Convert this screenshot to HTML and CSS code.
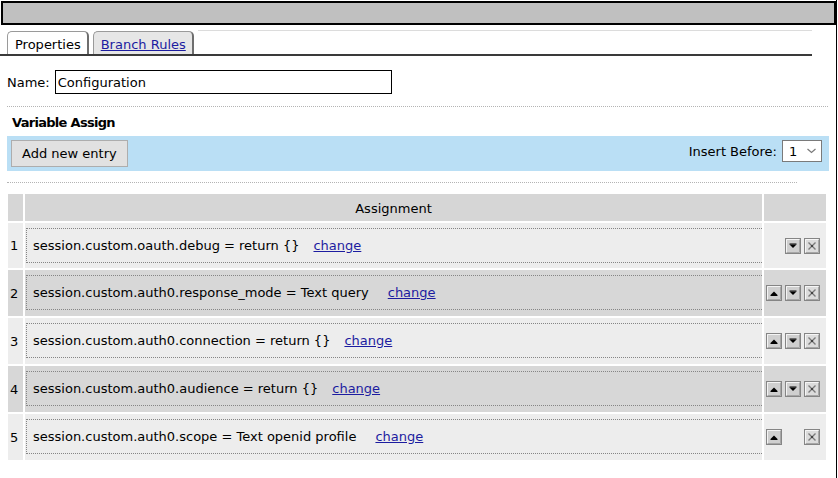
FILE: index.html
```html
<!DOCTYPE html>
<html>
<head>
<meta charset="utf-8">
<title>Variable Assign</title>
<link rel="stylesheet" href="styles.css">
</head>
<body>
<div class="page">
  <div class="titlebar"></div>

  <div class="tabs">
    <div class="tab active">Properties</div>
    <div class="tab"><a href="#">Branch Rules</a></div>
    <div class="tab-fill"></div>
  </div>

  <div class="name-row">
    <label class="name-label">Name:</label>
    <input class="name-input" type="text" value="Configuration">
  </div>

  <hr class="dots">

  <h2 class="section-title">Variable Assign</h2>

  <div class="toolbar">
    <button class="btn">Add new entry</button>
    <div class="insert">
      <span>Insert Before:</span>
      <div class="select">
        <span>1</span>
        <svg class="chev" width="9" height="6" viewBox="0 0 9 6"><path d="M0.5 1l4 3.5 4-3.5" fill="none" stroke="#7a7a7a" stroke-width="1.2"/></svg>
      </div>
    </div>
  </div>

  <hr class="dots short">

  <table class="grid">
    <thead>
      <tr class="head">
        <th class="c-num"></th>
        <th class="c-assign">Assignment</th>
        <th class="c-act"></th>
      </tr>
    </thead>
    <tbody>
      <tr class="odd first">
        <td class="c-num">1</td>
        <td class="c-assign"><div class="entry"><span>session.custom.oauth.debug = return {}</span><a href="#">change</a></div></td>
        <td class="c-act"><div class="acts">
          <span class="slot"></span>
          <svg class="ib" width="16" height="16" viewBox="0 0 16 16"><rect x="0.5" y="0.5" width="15" height="15" fill="#cfcfcf" stroke="#858585"/><path d="M1.5 14V1.5H14" stroke="#f4f4f4" fill="none"/><path d="M2 14.5H14.5V2" stroke="#a6a6a6" fill="none"/><path d="M4.5 6.5h7L8 10z" fill="#000"/><path d="M4.5 6h7" stroke="#000"/></svg>
          <svg class="ib" width="16" height="16" viewBox="0 0 16 16"><rect x="0.5" y="0.5" width="15" height="15" fill="#dcdcdc" stroke="#858585"/><path d="M1.5 14V1.5H14" stroke="#f6f6f6" fill="none"/><path d="M2 14.5H14.5V2" stroke="#a6a6a6" fill="none"/><path d="M4.5 4.5l7 7M11.5 4.5l-7 7" stroke="#7a7a7a" stroke-width="1.4"/><rect x="7" y="7" width="2" height="2" fill="#444"/></svg>
        </div></td>
      </tr>
      <tr class="even">
        <td class="c-num">2</td>
        <td class="c-assign"><div class="entry"><span>session.custom.auth0.response_mode = Text query</span><a class="wide" href="#">change</a></div></td>
        <td class="c-act"><div class="acts">
          <svg class="ib" width="16" height="16" viewBox="0 0 16 16"><rect x="0.5" y="0.5" width="15" height="15" fill="#cfcfcf" stroke="#858585"/><path d="M1.5 14V1.5H14" stroke="#f4f4f4" fill="none"/><path d="M2 14.5H14.5V2" stroke="#a6a6a6" fill="none"/><path d="M4.5 10h7L8 6.5z" fill="#000"/><path d="M4.5 10.5h7" stroke="#000"/></svg>
          <svg class="ib" width="16" height="16" viewBox="0 0 16 16"><rect x="0.5" y="0.5" width="15" height="15" fill="#cfcfcf" stroke="#858585"/><path d="M1.5 14V1.5H14" stroke="#f4f4f4" fill="none"/><path d="M2 14.5H14.5V2" stroke="#a6a6a6" fill="none"/><path d="M4.5 6.5h7L8 10z" fill="#000"/><path d="M4.5 6h7" stroke="#000"/></svg>
          <svg class="ib" width="16" height="16" viewBox="0 0 16 16"><rect x="0.5" y="0.5" width="15" height="15" fill="#dcdcdc" stroke="#858585"/><path d="M1.5 14V1.5H14" stroke="#f6f6f6" fill="none"/><path d="M2 14.5H14.5V2" stroke="#a6a6a6" fill="none"/><path d="M4.5 4.5l7 7M11.5 4.5l-7 7" stroke="#7a7a7a" stroke-width="1.4"/><rect x="7" y="7" width="2" height="2" fill="#444"/></svg>
        </div></td>
      </tr>
      <tr class="odd">
        <td class="c-num">3</td>
        <td class="c-assign"><div class="entry"><span>session.custom.auth0.connection = return {}</span><a href="#">change</a></div></td>
        <td class="c-act"><div class="acts">
          <svg class="ib" width="16" height="16" viewBox="0 0 16 16"><rect x="0.5" y="0.5" width="15" height="15" fill="#cfcfcf" stroke="#858585"/><path d="M1.5 14V1.5H14" stroke="#f4f4f4" fill="none"/><path d="M2 14.5H14.5V2" stroke="#a6a6a6" fill="none"/><path d="M4.5 10h7L8 6.5z" fill="#000"/><path d="M4.5 10.5h7" stroke="#000"/></svg>
          <svg class="ib" width="16" height="16" viewBox="0 0 16 16"><rect x="0.5" y="0.5" width="15" height="15" fill="#cfcfcf" stroke="#858585"/><path d="M1.5 14V1.5H14" stroke="#f4f4f4" fill="none"/><path d="M2 14.5H14.5V2" stroke="#a6a6a6" fill="none"/><path d="M4.5 6.5h7L8 10z" fill="#000"/><path d="M4.5 6h7" stroke="#000"/></svg>
          <svg class="ib" width="16" height="16" viewBox="0 0 16 16"><rect x="0.5" y="0.5" width="15" height="15" fill="#dcdcdc" stroke="#858585"/><path d="M1.5 14V1.5H14" stroke="#f6f6f6" fill="none"/><path d="M2 14.5H14.5V2" stroke="#a6a6a6" fill="none"/><path d="M4.5 4.5l7 7M11.5 4.5l-7 7" stroke="#7a7a7a" stroke-width="1.4"/><rect x="7" y="7" width="2" height="2" fill="#444"/></svg>
        </div></td>
      </tr>
      <tr class="even">
        <td class="c-num">4</td>
        <td class="c-assign"><div class="entry"><span>session.custom.auth0.audience = return {}</span><a href="#">change</a></div></td>
        <td class="c-act"><div class="acts">
          <svg class="ib" width="16" height="16" viewBox="0 0 16 16"><rect x="0.5" y="0.5" width="15" height="15" fill="#cfcfcf" stroke="#858585"/><path d="M1.5 14V1.5H14" stroke="#f4f4f4" fill="none"/><path d="M2 14.5H14.5V2" stroke="#a6a6a6" fill="none"/><path d="M4.5 10h7L8 6.5z" fill="#000"/><path d="M4.5 10.5h7" stroke="#000"/></svg>
          <svg class="ib" width="16" height="16" viewBox="0 0 16 16"><rect x="0.5" y="0.5" width="15" height="15" fill="#cfcfcf" stroke="#858585"/><path d="M1.5 14V1.5H14" stroke="#f4f4f4" fill="none"/><path d="M2 14.5H14.5V2" stroke="#a6a6a6" fill="none"/><path d="M4.5 6.5h7L8 10z" fill="#000"/><path d="M4.5 6h7" stroke="#000"/></svg>
          <svg class="ib" width="16" height="16" viewBox="0 0 16 16"><rect x="0.5" y="0.5" width="15" height="15" fill="#dcdcdc" stroke="#858585"/><path d="M1.5 14V1.5H14" stroke="#f6f6f6" fill="none"/><path d="M2 14.5H14.5V2" stroke="#a6a6a6" fill="none"/><path d="M4.5 4.5l7 7M11.5 4.5l-7 7" stroke="#7a7a7a" stroke-width="1.4"/><rect x="7" y="7" width="2" height="2" fill="#444"/></svg>
        </div></td>
      </tr>
      <tr class="odd">
        <td class="c-num">5</td>
        <td class="c-assign"><div class="entry"><span>session.custom.auth0.scope = Text openid profile</span><a class="wide" href="#">change</a></div></td>
        <td class="c-act"><div class="acts">
          <svg class="ib" width="16" height="16" viewBox="0 0 16 16"><rect x="0.5" y="0.5" width="15" height="15" fill="#cfcfcf" stroke="#858585"/><path d="M1.5 14V1.5H14" stroke="#f4f4f4" fill="none"/><path d="M2 14.5H14.5V2" stroke="#a6a6a6" fill="none"/><path d="M4.5 10h7L8 6.5z" fill="#000"/><path d="M4.5 10.5h7" stroke="#000"/></svg>
          <span class="slot"></span>
          <svg class="ib" width="16" height="16" viewBox="0 0 16 16"><rect x="0.5" y="0.5" width="15" height="15" fill="#dcdcdc" stroke="#858585"/><path d="M1.5 14V1.5H14" stroke="#f6f6f6" fill="none"/><path d="M2 14.5H14.5V2" stroke="#a6a6a6" fill="none"/><path d="M4.5 4.5l7 7M11.5 4.5l-7 7" stroke="#7a7a7a" stroke-width="1.4"/><rect x="7" y="7" width="2" height="2" fill="#444"/></svg>
        </div></td>
      </tr>
    </tbody>
  </table>
</div>
</body>
</html>
```

FILE: styles.css
```css
* { box-sizing: border-box; }

body {
  margin: 0;
  background: #fff;
  color: #000;
  font-family: "DejaVu Sans", Verdana, sans-serif;
  font-size: 13px;
}

a { color: #1c1ca0; text-decoration: underline; }

.page {
  width: 837px;
  height: 478px;
  border-right: 1px solid #000;
  overflow: hidden;
}

.titlebar {
  margin: 1px 0 0 1px;
  height: 24px;
  border: 2px solid #000;
  background: #c0c0c0;
}

/* tabs */
.tabs {
  display: flex;
  align-items: flex-end;
  margin: 5px 24px 0 0;
  padding-left: 7px;
  height: 26px;
  border-bottom: 2px solid #3a3a3a;
}

.tab {
  height: 23px;
  margin-right: 4px;
  padding: 4px 6px 0 7px;
  line-height: 18px;
  border: 1px solid #9a9a9a;
  border-right: 2px solid #6e6e6e;
  border-bottom: 0;
  border-radius: 5px 5px 0 0;
  background: #e6e6e6;
  white-space: nowrap;
}

.tab.active { background: #fff; }

.tab-fill {
  flex: 1;
  align-self: stretch;
  border-top: 1px solid #dcdcdc;
}

/* name */
.name-row {
  display: flex;
  align-items: center;
  gap: 5px;
  margin-top: 14px;
  padding-left: 7px;
}

.name-input {
  width: 337px;
  height: 24px;
  margin: 0;
  padding: 0 2px;
  border: 1px solid #000;
  font: inherit;
  color: #000;
  background: #fff;
  outline: none;
}

.dots {
  margin: 12px 0 0 7px;
  width: 821px;
  height: 0;
  border: 0;
  border-top: 1px dotted #b4b4b4;
}

.dots.short {
  margin-top: 11px;
  width: 790px;
}

.section-title {
  margin: 8px 0 0 12px;
  font-size: 13px;
  font-weight: bold;
  line-height: 16px;
  letter-spacing: -0.7px;
}

/* toolbar */
.toolbar {
  display: flex;
  justify-content: space-between;
  align-items: flex-start;
  margin: 5px 0 0 7px;
  width: 822px;
  height: 35px;
  padding: 4px 7px 4px 4px;
  background: #badff5;
}

.btn {
  height: 27px;
  margin: 0;
  padding: 0 10px;
  border: 1px solid #adadad;
  background: #e1e1e1;
  font-family: inherit;
  font-size: 13px;
  color: #000;
}

.insert {
  display: flex;
  align-items: center;
  gap: 5px;
  height: 22px;
}

.select {
  display: flex;
  align-items: center;
  justify-content: space-between;
  width: 40px;
  height: 22px;
  padding: 0 5px 0 6px;
  border: 1px solid #7a7a7a;
  background: #fff;
}

/* grid */
.grid {
  margin: 9px 0 0 6px;
  width: 822px;
  border-collapse: separate;
  border-spacing: 2px;
  table-layout: fixed;
}

.grid th,
.grid td {
  padding: 0;
  font-weight: normal;
  vertical-align: middle;
}

.grid .head { height: 27px; }
.grid .head th { background: #d6d6d6; text-align: center; padding-top: 2px; }

.grid tbody tr { height: 46px; }
.grid tbody tr.first { height: 45px; }
.grid .odd td { background: #ededed; }
.grid .even td { background: #d7d7d7; }

.c-num { width: 15px; }
.c-act { width: 62px; }

.grid td.c-num { padding-left: 2px; }

.grid td.c-assign { padding: 5px 0 6px 1px; }
.grid tr.first td.c-assign { padding-bottom: 5px; }

.entry {
  display: flex;
  align-items: center;
  height: 35px;
  padding-left: 6px;
  border: 1px dotted #858585;
  border-right: 0;
  white-space: nowrap;
}

.entry a { margin-left: 14px; }
.entry a.wide { margin-left: 19px; }

.grid td.c-act { padding-left: 2px; }

.acts {
  display: flex;
  align-items: center;
  gap: 3px;
}

.ib { display: block; }

.slot { width: 16px; height: 16px; }
```
